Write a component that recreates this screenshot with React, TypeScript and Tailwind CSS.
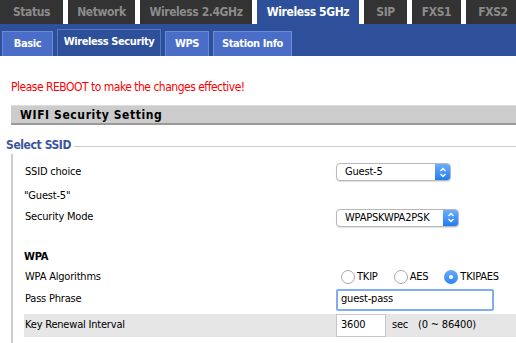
import React from 'react';

const topTabs = [
    { label: 'Status', w: 'w-[63px]' },
    { label: 'Network', w: 'w-[67px]' },
    { label: 'Wireless 2.4GHz', w: 'w-[112px]' },
    { label: 'Wireless 5GHz', w: 'w-[102px]', active: true },
    { label: 'SIP', w: 'w-[43px]' },
    { label: 'FXS1', w: 'w-[49px]' },
    { label: 'FXS2', w: 'w-[54px]' },
];

const subTabs = [
    { label: 'Basic', w: 'w-[51px]' },
    { label: 'Wireless Security', w: 'w-[104px]', active: true },
    { label: 'WPS', w: 'w-[44px]' },
    { label: 'Station Info', w: 'w-[79px]' },
];

const Chevrons: React.FC = () => (
    <svg width="8" height="11" viewBox="0 0 8 11" fill="none" stroke="white" strokeWidth="1.4">
        <path d="M1.5 4 L4 1.5 L6.5 4" />
        <path d="M1.5 7 L4 9.5 L6.5 7" />
    </svg>
);

const MacSelect: React.FC<{ value: string; w: string }> = ({ value, w }) => (
    <div className={`${w} h-[18px] flex items-stretch rounded-[4px] border border-[#b8b8b8] bg-white shadow-[0_1px_1px_rgba(0,0,0,0.12)] overflow-hidden`}>
        <span className="flex-1 pl-[8px] leading-[16px] text-black">{value}</span>
        <span className="w-[15px] flex items-center justify-center bg-gradient-to-b from-[#6aaefc] to-[#1f7bf2]">
            <Chevrons />
        </span>
    </div>
);

const Radio: React.FC<{ label: string; checked?: boolean }> = ({ label, checked }) => (
    <label className="flex items-center gap-[2px]">
        {checked ? (
            <span className="w-[14px] h-[14px] rounded-full bg-gradient-to-b from-[#68acfb] to-[#2a84f3] flex items-center justify-center">
                <span className="w-[4px] h-[4px] rounded-full bg-white" />
            </span>
        ) : (
            <span className="w-[14px] h-[14px] rounded-full border border-[#a9a9a9] bg-white" />
        )}
        <span>{label}</span>
    </label>
);

const Row: React.FC<{ label: React.ReactNode; children?: React.ReactNode; className?: string }> = ({ label, children, className = '' }) => (
    <div className={`flex items-center ${className}`}>
        <div className="w-[312px] pl-[1px]">{label}</div>
        <div className="flex-1 flex items-center">{children}</div>
    </div>
);

export default function App() {
    return (
        <div className="w-[516px] h-[343px] bg-white overflow-hidden text-[11px] tracking-[-0.2px] text-black" style={{ fontFamily: '"DejaVu Sans Condensed", "DejaVu Sans", Verdana, sans-serif' }}>
            {/* top tabs */}
            <div className="flex gap-[5px] h-[24px] items-end">
                {topTabs.map((t) => (
                    <div
                        key={t.label}
                        className={`${t.w} shrink-0 h-[24px] whitespace-nowrap flex items-center justify-center font-bold text-[12px] tracking-[-0.4px] ${t.active ? 'bg-[#2e4f99] text-white' : 'bg-[#333333] text-[#8b8b8b]'}`}
                    >
                        {t.label}
                    </div>
                ))}
            </div>

            {/* sub tabs */}
            <div className="h-[32px] bg-[#2e4f99] flex items-end gap-[4px] pl-[2px]">
                {subTabs.map((t) => (
                    <div
                        key={t.label}
                        className={`${t.w} shrink-0 whitespace-nowrap flex items-center justify-center text-white text-[11px] font-bold tracking-[-0.4px] ${t.active ? 'h-[27px] bg-[#2e4f99] border border-b-0 border-[#5574c4] pb-[2px]' : 'h-[25px] bg-[#4a6dc8] border border-b-0 border-[#6b8ad8]'}`}
                    >
                        {t.label}
                    </div>
                ))}
            </div>

            <div className="pl-[11px] pt-[22px] text-[#ff0000] text-[12px] tracking-[-0.5px]">Please REBOOT to make the changes effective!</div>

            <div className="ml-[11px] mt-[9px] h-[20px] bg-[#cccccc] border-t border-[#dddddd] border-b-2 border-b-[#999999] pl-[9px] flex items-center font-bold text-[12px] tracking-[0.6px]">
                WIFI Security Setting
            </div>

            {/* fieldset */}
            <div className="mt-[11px] flex items-center">
                <span className="pl-[6px] pr-[3px] text-[#3b559c] font-bold text-[12px] tracking-[-0.4px]">Select SSID</span>
                <span className="flex-1 h-px bg-[#cccccc] mt-[3px]" />
            </div>
            <div className="ml-[11px] border-l-2 border-[#cccccc] pl-[11px] pt-[9px] h-[200px]">
                <Row label="SSID choice">
                    <MacSelect value="Guest-5" w="w-[115px]" />
                </Row>
                <div className="mt-[7px]">"Guest-5"</div>
                <Row label="Security Mode" className="mt-[4px]">
                    <MacSelect value="WPAPSKWPA2PSK" w="w-[123px]" />
                </Row>
                <div className="mt-[22px] font-bold">WPA</div>
                <Row label="WPA Algorithms" className="mt-[4px]">
                    <div className="flex items-center gap-[16px] pl-[5px]">
                        <Radio label="TKIP" />
                        <Radio label="AES" />
                        <Radio label="TKIPAES" checked />
                    </div>
                </Row>
                <Row label="Pass Phrase" className="mt-[3px]">
                    <div className="w-[158px] h-[22px] border-2 border-[#7eaef0] rounded-[2px] pl-[3px] flex items-center">guest-pass</div>
                </Row>
                <Row label="Key Renewal Interval" className="mt-[3px] bg-[#e6e6e6]">
                    <div className="w-[50px] h-[23px] border border-[#c6c6c6] bg-white pl-[4px] flex items-center">3600</div>
                    <span className="pl-[6px]">sec</span>
                    <span className="pl-[10px]">(0 ~ 86400)</span>
                </Row>
            </div>
        </div>
    );
}
